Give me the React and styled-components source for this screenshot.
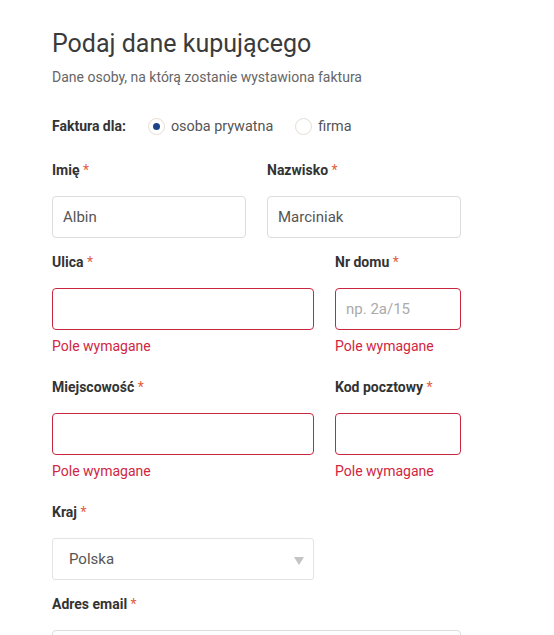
import React from 'react';
import styled, { createGlobalStyle } from 'styled-components';

const Global = createGlobalStyle`
  html, body {
    margin: 0;
    padding: 0;
    background: #ffffff;
  }
  body {
    font-family: Roboto, 'Liberation Sans', sans-serif;
    color: #333333;
  }
`

const Page = styled.div`
  width: 409px;
  padding-left: 52px;
  padding-top: 29px;
`

const Title = styled.h1`
  margin: 0;
  font-size: 25px;
  line-height: 30px;
  font-weight: 400;
  color: #3b3b3b;
`

const Subtitle = styled.p`
  margin: 8px 0 0;
  font-size: 14px;
  line-height: 20px;
  color: #666666;
`

const InvoiceRow = styled.div`
  display: flex;
  align-items: center;
  margin-top: 29px;
  height: 20px;
`

const InvoiceLabel = styled.span`
  font-size: 14px;
  font-weight: 700;
  color: #333333;
  margin-right: 22px;
`

const RadioOption = styled.label`
  display: flex;
  align-items: center;
  font-size: 14.4px;
  color: #555555;
  margin-right: 22px;
  cursor: pointer;
`

const RadioCircle = styled.span`
  box-sizing: border-box;
  width: 17px;
  height: 17px;
  border-radius: 50%;
  border: 1px solid #e6ddd2;
  display: flex;
  align-items: center;
  justify-content: center;
  margin-right: 6px;
  &::after {
    content: '';
    width: 7px;
    height: 7px;
    border-radius: 50%;
    background: ${p => (p.$checked ? '#1c4586' : 'transparent')};
  }
`

const Grid = styled.div`
  display: grid;
  grid-template-columns: ${p => p.$cols};
  column-gap: ${p => p.$gap}px;
  margin-top: ${p => p.$top || 0}px;
`

const Field = styled.div`
  display: flex;
  flex-direction: column;
  margin-bottom: ${p => (p.$error ? 21 : 14)}px;
`

const Label = styled.label`
  font-size: 14px;
  line-height: 20px;
  font-weight: 700;
  color: #333333;
  margin-bottom: 16px;
  span {
    color: #e4603f;
    font-weight: 400;
  }
`

const Input = styled.input`
  box-sizing: border-box;
  width: 100%;
  height: 42px;
  border: 1px solid ${p => (p.$error ? '#c8283f' : '#dcdcdc')};
  border-radius: 4px;
  padding: 0 10px;
  font-family: Roboto, 'Liberation Sans', sans-serif;
  font-size: 15px;
  color: #555555;
  outline: none;
  &::placeholder {
    color: #aaaaaa;
  }
`

const SelectBox = styled.div`
  box-sizing: border-box;
  position: relative;
  height: 42px;
  border: 1px solid #e3e3e3;
  border-radius: 3px;
  display: flex;
  align-items: center;
  padding: 0 16px;
  font-size: 15px;
  color: #555555;
  &::after {
    content: '';
    position: absolute;
    right: 9px;
    top: 18px;
    border-left: 5px solid transparent;
    border-right: 5px solid transparent;
    border-top: 8px solid #c4c4c4;
  }
`

const ErrorText = styled.div`
  margin-top: 6px;
  font-size: 14px;
  line-height: 20px;
  color: #d0263f;
`

const FormField = ({ label, value, placeholder, error }) => (
  <Field $error={error}>
    <Label>
      {label} <span>*</span>
    </Label>
    <Input $error={error} defaultValue={value} placeholder={placeholder} />
    {error && <ErrorText>Pole wymagane</ErrorText>}
  </Field>
)

const App = () => {
  return (
    <Page>
      <Global />
      <Title>Podaj dane kupującego</Title>
      <Subtitle>Dane osoby, na którą zostanie wystawiona faktura</Subtitle>

      <InvoiceRow>
        <InvoiceLabel>Faktura dla:</InvoiceLabel>
        <RadioOption>
          <RadioCircle $checked />
          osoba prywatna
        </RadioOption>
        <RadioOption>
          <RadioCircle />
          firma
        </RadioOption>
      </InvoiceRow>

      <Grid $cols="194px 194px" $gap={21} $top={24}>
        <FormField label="Imię" value="Albin" />
        <FormField label="Nazwisko" value="Marciniak" />
      </Grid>

      <Grid $cols="262px 126px" $gap={21}>
        <FormField label="Ulica" error />
        <FormField label="Nr domu" placeholder="np. 2a/15" error />
      </Grid>

      <Grid $cols="262px 126px" $gap={21}>
        <FormField label="Miejscowość" error />
        <FormField label="Kod pocztowy" error />
      </Grid>

      <Grid $cols="262px 126px" $gap={21}>
        <Field>
          <Label>
            Kraj <span>*</span>
          </Label>
          <SelectBox>Polska</SelectBox>
        </Field>
      </Grid>

      <Field>
        <Label>
          Adres email <span>*</span>
        </Label>
        <Input />
      </Field>
    </Page>
  )
}

export default App
